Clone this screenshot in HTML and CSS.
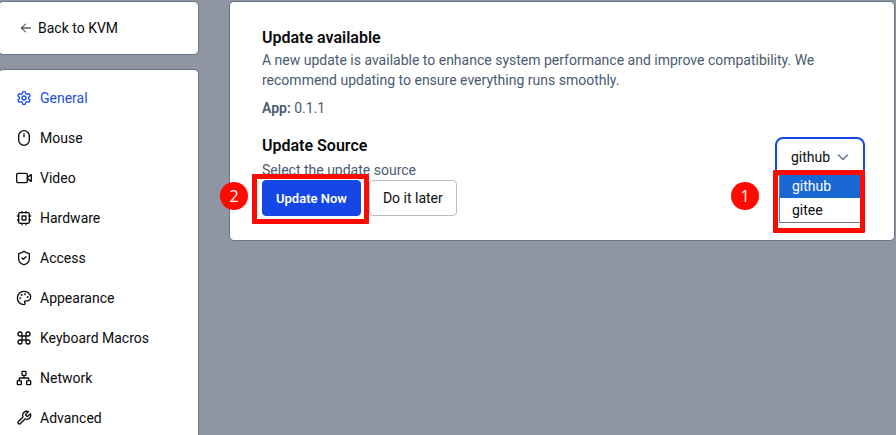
FILE: index.html
```html
<!DOCTYPE html>
<html lang="en">
<head>
    <meta charset="UTF-8">
    <meta name="viewport" content="width=device-width, initial-scale=1.0">
    <title>Settings - General</title>
    <link rel="stylesheet" href="styles.css">
</head>
<body>

    <div class="layout">

        <!-- Sidebar -->
        <aside class="sidebar">
            <div class="card back-card">
                <a class="back-link" href="#">
                    <svg class="icon-small" viewBox="0 0 24 24"><path d="m11 20-8-8 8-8"/><path d="M21 12H3"/></svg>
                    Back to KVM
                </a>
            </div>

            <nav class="card menu">
                <a class="menu-item active" href="#">
                    <svg class="icon" viewBox="0 0 24 24"><path d="M12.22 2h-.44a2 2 0 0 0-2 2v.18a2 2 0 0 1-1 1.73l-.43.25a2 2 0 0 1-2 0l-.15-.08a2 2 0 0 0-2.73.73l-.22.38a2 2 0 0 0 .73 2.73l.15.1a2 2 0 0 1 1 1.72v.51a2 2 0 0 1-1 1.74l-.15.09a2 2 0 0 0-.73 2.73l.22.38a2 2 0 0 0 2.73.73l.15-.08a2 2 0 0 1 2 0l.43.25a2 2 0 0 1 1 1.73V20a2 2 0 0 0 2 2h.44a2 2 0 0 0 2-2v-.18a2 2 0 0 1 1-1.73l.43-.25a2 2 0 0 1 2 0l.15.08a2 2 0 0 0 2.73-.73l.22-.39a2 2 0 0 0-.73-2.73l-.15-.08a2 2 0 0 1-1-1.74v-.5a2 2 0 0 1 1-1.74l.15-.09a2 2 0 0 0 .73-2.73l-.22-.38a2 2 0 0 0-2.73-.73l-.15.08a2 2 0 0 1-2 0l-.43-.25a2 2 0 0 1-1-1.73V4a2 2 0 0 0-2-2z"/><circle cx="12" cy="12" r="3"/></svg>
                    General
                </a>
                <a class="menu-item" href="#">
                    <svg class="icon" viewBox="0 0 24 24"><rect x="4" y="1" width="16" height="22" rx="8"/><path d="M12 6v4"/></svg>
                    Mouse
                </a>
                <a class="menu-item" href="#">
                    <svg class="icon" viewBox="0 0 24 24"><path d="m17 11 6-4v10l-6-4"/><rect x="1" y="5" width="16" height="14" rx="2"/></svg>
                    Video
                </a>
                <a class="menu-item" href="#">
                    <svg class="icon" viewBox="0 0 24 24"><rect x="4" y="4" width="16" height="16" rx="2"/><rect x="9" y="9" width="6" height="6" rx="1"/><path d="M15 2v2M15 20v2M2 15h2M2 9h2M20 15h2M20 9h2M9 2v2M9 20v2"/></svg>
                    Hardware
                </a>
                <a class="menu-item" href="#">
                    <svg class="icon" viewBox="0 0 24 24"><path d="M20 13c0 5-3.500 7.500-7.660 8.950a1 1 0 0 1-.67-.01C7.500 20.500 4 18 4 13V6a1 1 0 0 1 1-1c2 0 4.500-1.200 6.240-2.720a1.170 1.170 0 0 1 1.520 0C14.510 3.810 17 5 19 5a1 1 0 0 1 1 1z"/><path d="m9 12 2 2 4-4"/></svg>
                    Access
                </a>
                <a class="menu-item" href="#">
                    <svg class="icon" viewBox="0 0 24 24"><circle cx="13.500" cy="6.500" r=".5"/><circle cx="17.500" cy="10.500" r=".5"/><circle cx="8.500" cy="7.500" r=".5"/><circle cx="6.500" cy="12.500" r=".5"/><path d="M12 2C6.500 2 2 6.500 2 12s4.500 10 10 10c.926 0 1.648-.746 1.648-1.688 0-.437-.18-.835-.437-1.125-.29-.289-.438-.652-.438-1.125a1.640 1.640 0 0 1 1.668-1.668h1.996c3.051 0 5.555-2.503 5.555-5.554C21.965 6.012 17.461 2 12 2z"/></svg>
                    Appearance
                </a>
                <a class="menu-item" href="#">
                    <svg class="icon" viewBox="0 0 24 24"><path d="M15 6v12a3 3 0 1 0 3-3H6a3 3 0 1 0 3 3V6a3 3 0 1 0-3 3h12a3 3 0 1 0-3-3"/></svg>
                    Keyboard Macros
                </a>
                <a class="menu-item" href="#">
                    <svg class="icon" viewBox="0 0 24 24"><rect x="16" y="16" width="6" height="6" rx="1"/><rect x="2" y="16" width="6" height="6" rx="1"/><rect x="9" y="2" width="6" height="6" rx="1"/><path d="M5 16v-3a1 1 0 0 1 1-1h12a1 1 0 0 1 1 1v3M12 12V8"/></svg>
                    Network
                </a>
                <a class="menu-item" href="#">
                    <svg class="icon" viewBox="0 0 24 24"><path d="M14.700 6.300a1 1 0 0 0 0 1.400l1.600 1.600a1 1 0 0 0 1.400 0l3.770-3.770a6 6 0 0 1-7.940 7.940l-6.910 6.910a2.120 2.120 0 0 1-3-3l6.910-6.910a6 6 0 0 1 7.940-7.940l-3.760 3.760z"/></svg>
                    Advanced
                </a>
            </nav>
        </aside>

        <!-- Update panel -->
        <main class="card panel">
            <h2>Update available</h2>
            <p class="intro">A new update is available to enhance system performance and improve compatibility. We recommend updating to ensure everything runs smoothly.</p>
            <p class="version"><strong>App:</strong> 0.1.1</p>

            <div class="source-row">
                <div class="source-text">
                    <h2><label for="source">Update Source</label></h2>
                    <p>Select the update source</p>
                </div>
                <div class="select-wrap">
                    <select id="source">
                        <option selected>github</option>
                        <option>gitee</option>
                    </select>
                    <svg class="chevron" viewBox="0 0 24 24"><path d="m3 8 9 9 9-9"/></svg>
                    <ul class="options">
                        <li class="selected">github</li>
                        <li>gitee</li>
                    </ul>
                    <span class="marker marker-source"></span>
                    <span class="step step-source">1</span>
                </div>
            </div>

            <div class="actions">
                <div class="action-marked">
                    <button type="button" class="primary">Update Now</button>
                    <span class="marker marker-update"></span>
                    <span class="step step-update">2</span>
                </div>
                <button type="button">Do it later</button>
            </div>
        </main>

    </div>

</body>
</html>
```

FILE: styles.css
```css
* {
    margin: 0;
    padding: 0;
    box-sizing: border-box;
}

body {
    background: #8f95a2;
    color: #0b0b0c;
    font-family: 'Roboto', sans-serif;
    font-size: 14px;
    line-height: 20px;
    height: 100vh;
    overflow: hidden;
}

a {
    color: inherit;
    text-decoration: none;
}

svg {
    flex: none;
    fill: none;
    stroke: currentColor;
    stroke-width: 2;
    stroke-linecap: round;
    stroke-linejoin: round;
}

.layout {
    display: flex;
    align-items: flex-start;
    gap: 30px;
    padding: 1px 1px 0 0;
}

.card {
    background: #ffffff;
    border: 1px solid #687384;
    border-radius: 5px;
}

/* Sidebar */
.sidebar {
    display: flex;
    flex-direction: column;
    flex: none;
    gap: 14px;
    width: 201px;
    margin-left: -2px;
}

.back-card {
    padding: 16px 21px;
}

.back-link {
    display: flex;
    align-items: center;
    gap: 6px;
}

.icon-small {
    width: 12px;
    height: 12px;
}

.menu {
    padding: 8px;
}

.menu-item {
    display: flex;
    align-items: center;
    gap: 8px;
    height: 40px;
    padding: 0 9px;
}

.menu-item.active {
    color: #1d4ee8;
}

.icon {
    width: 16px;
    height: 16px;
}

/* Update panel */
.panel {
    flex: 1;
    padding: 24px 29px 24px 32px;
}

.panel p {
    color: #4a5a70;
}

h2 {
    font-size: 16px;
    font-weight: 600;
    line-height: 24px;
}

.intro {
    max-width: 576px;
}

.version {
    margin-top: 8px;
}

.version strong {
    font-weight: 600;
}

.source-row {
    display: flex;
    align-items: center;
    justify-content: space-between;
    margin-top: 16px;
}

.source-text {
    display: grid;
    gap: 2px;
}

.select-wrap {
    position: relative;
    width: 90px;
}

select {
    display: block;
    width: 100%;
    height: 40px;
    padding: 0 14px;
    appearance: none;
    background: #ffffff;
    border: 2px solid #1447e6;
    border-radius: 8px;
    color: #0b0b0c;
    font: 14px 'Roboto', sans-serif;
}

.chevron {
    position: absolute;
    top: 14px;
    right: 16px;
    width: 12px;
    height: 12px;
    color: #64748b;
    stroke-width: 3;
}

.options {
    position: absolute;
    top: 36px;
    left: 4px;
    right: 4px;
    background: #ffffff;
    border: 1px solid #767676;
    list-style: none;
    line-height: 24px;
}

.options li {
    padding: 0 12px;
}

.options .selected {
    background: #1967d2;
    color: #ffffff;
}

.actions {
    display: flex;
    gap: 8px;
}

button {
    height: 36px;
    padding: 0 13px;
    background: #ffffff;
    border: 1px solid #b9bdc7;
    border-radius: 4px;
    color: #0b0b0c;
    font: 14px 'Roboto', sans-serif;
}

.primary {
    background: #1447e6;
    border-color: #1447e6;
    color: #ffffff;
    font-size: 13px;
    font-weight: 600;
}

.action-marked {
    position: relative;
}

/* Numbered callouts */
.marker {
    position: absolute;
    border: 5px solid #ff0a00;
    border-radius: 1px;
}

.marker-source {
    top: 33px;
    left: -2px;
    right: 0;
    height: 63px;
}

.marker-update {
    top: -6px;
    left: -10px;
    right: -8px;
    bottom: -8px;
}

.step {
    position: absolute;
    width: 28px;
    height: 28px;
    border-radius: 50%;
    background: #ff0a00;
    color: #ffffff;
    font-family: 'Open Sans', sans-serif;
    font-size: 16px;
    line-height: 28px;
    text-align: center;
}

.step-source {
    top: 45px;
    left: -44px;
}

.step-update {
    top: 2px;
    left: -42px;
}
```
